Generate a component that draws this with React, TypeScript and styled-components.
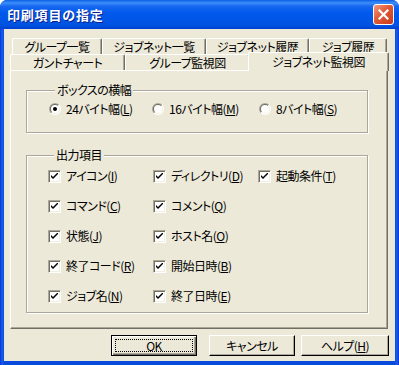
import React from "react";
import styled, { createGlobalStyle } from "styled-components";

const Global = createGlobalStyle`
  html, body { margin: 0; padding: 0; background: #ffffff; }
  #root { width: 399px; height: 365px; }
`;

const Window = styled.div`
  width: 399px;
  height: 365px;
  box-sizing: border-box;
  display: flex;
  flex-direction: column;
  background: linear-gradient(to right, #0831D9 0px, #1660EA 2px, #0A4BDD 4px, #0A4BDD 395px, #1660EA 397px, #0831D9 399px);
  border-radius: 7px 7px 0 0;
  overflow: hidden;
  font-family: "Noto Sans CJK JP", "Noto Sans CJK SC", sans-serif;
  font-size: 12px;
  font-feature-settings: "palt";
  letter-spacing: -0.5px;
  color: #000;
`;

const TitleBar = styled.div`
  height: 29px;
  flex: none;
  display: flex;
  align-items: center;
  justify-content: space-between;
  padding: 0 5px 0 7px;
  background: linear-gradient(
    to bottom,
    #0A5FE6 0%,
    #3C8EF9 10%,
    #1767F0 22%,
    #0059EC 45%,
    #0055E6 70%,
    #0152E0 88%,
    #003FD0 100%
  );
`;

const Title = styled.span`
  color: #fff;
  font-weight: bold;
  font-size: 13px;
  letter-spacing: 0.8px;
  text-shadow: 1px 1px 0 #0A1E8A;
  font-feature-settings: normal;
`;

const CloseButton = styled.div`
  width: 21px;
  height: 21px;
  box-sizing: border-box;
  border: 1px solid #fff;
  border-radius: 3px;
  background: linear-gradient(135deg, #F09A7C 0%, #E05A36 45%, #C7391A 100%);
  display: flex;
  align-items: center;
  justify-content: center;
`;

const Client = styled.div`
  flex: 1;
  margin: 0 4px 4px 4px;
  background: #ECE9D8;
  padding: 9px 7px 0 6px;
  display: flex;
  flex-direction: column;
`;

const TabRow = styled.div<{ $indent: number }>`
  display: flex;
  height: 16px;
  padding-left: ${(p) => p.$indent}px;
`;

const Tab = styled.div<{ $w: number; $selected?: boolean }>`
  width: ${(p) => (p.$selected ? p.$w + 4 : p.$w)}px;
  box-sizing: border-box;
  flex: none;
  height: ${(p) => (p.$selected ? 19 : 16)}px;
  margin: ${(p) => (p.$selected ? "-2px -2px -1px -2px" : "0")};
  position: relative;
  z-index: ${(p) => (p.$selected ? 2 : 1)};
  background: #ECE9D8;
  border-top: 1px solid #fff;
  border-left: 1px solid #fff;
  border-right: 1px solid #716F64;
  border-radius: 2px 2px 0 0;
  box-shadow: inset -1px 0 0 #ACA899;
  display: flex;
  align-items: ${(p) => (p.$selected ? "flex-start" : "center")};
  padding-top: ${(p) => (p.$selected ? 2 : 0)}px;
  justify-content: center;
  line-height: 14px;
  white-space: nowrap;
`;

const Panel = styled.div`
  height: 259px;
  flex: none;
  box-sizing: border-box;
  background: #ECE9D8;
  border-top: 1px solid #fff;
  border-left: 1px solid #fff;
  border-right: 1px solid #716F64;
  border-bottom: 1px solid #716F64;
  box-shadow: inset -1px -1px 0 #ACA899;
  padding: 12px 19px 0 15px;
  display: flex;
  flex-direction: column;
`;

const Group = styled.fieldset<{ $top: number; $padLeft: number }>`
  margin: ${(p) => p.$top}px 0 0 0;
  padding: 0 0 0 ${(p) => p.$padLeft}px;
  border: 1px solid #ACA899;
  box-shadow: inset 1px 1px 0 #fff, 1px 1px 0 #fff;
  min-width: 0;
`;

const Legend = styled.legend`
  margin-left: 6px;
  padding: 0 2px;
  line-height: 14px;
  background: #ECE9D8;
`;

const RadioRow = styled.div`
  display: flex;
  height: 14px;
  align-items: center;
  margin: 5px 0 16px 0;
`;

const Option = styled.div<{ $w?: number }>`
  display: flex;
  align-items: center;
  gap: 5px;
  white-space: nowrap;
  ${(p) => (p.$w ? `width: ${p.$w}px; flex: none;` : "")}
  line-height: 14px;
`;

const RadioOuter = styled.div`
  width: 12px;
  height: 12px;
  flex: none;
  border-radius: 50%;
  background: linear-gradient(135deg, #ACA899 50%, #fff 50%);
  display: flex;
  align-items: center;
  justify-content: center;
`;

const RadioInner = styled.div`
  width: 10px;
  height: 10px;
  border-radius: 50%;
  background: linear-gradient(135deg, #716F64 50%, #F1EFE2 50%);
  display: flex;
  align-items: center;
  justify-content: center;
`;

const RadioWell = styled.div`
  width: 8px;
  height: 8px;
  border-radius: 50%;
  background: #fff;
  display: flex;
  align-items: center;
  justify-content: center;
`;

const RadioDot = styled.div`
  width: 4px;
  height: 4px;
  border-radius: 50%;
  background: #000;
`;

const CheckGrid = styled.div`
  display: grid;
  grid-template-columns: 105px 105px auto;
  grid-auto-rows: 30px;
  align-items: center;
  margin-top: -1px;
  padding-bottom: 1px;
`;

const CheckBox = styled.div`
  width: 13px;
  height: 13px;
  flex: none;
  box-sizing: border-box;
  background: #fff;
  border-top: 1px solid #ACA899;
  border-left: 1px solid #ACA899;
  border-right: 1px solid #fff;
  border-bottom: 1px solid #fff;
  box-shadow: inset 1px 1px 0 #716F64, inset -1px -1px 0 #F1EFE2;
  display: flex;
  align-items: center;
  justify-content: center;
`;

const U = styled.span`
  text-decoration: underline;
  text-underline-offset: 1px;
`;

const ButtonRow = styled.div`
  display: flex;
  justify-content: flex-end;
  margin-top: 6px;
  margin-right: -1px;
`;

const Button = styled.div<{ $default?: boolean; $ml: number; $w: number }>`
  width: ${(p) => p.$w}px;
  height: 21px;
  margin-left: ${(p) => p.$ml}px;
  box-sizing: border-box;
  background: #ECE9D8;
  ${(p) =>
    p.$default
      ? `border: 1px solid #000; box-shadow: inset 1px 1px 0 #fff, inset -1px -1px 0 #716F64, inset -2px -2px 0 #ACA899;`
      : `border-top: 1px solid #fff; border-left: 1px solid #fff; border-right: 1px solid #000; border-bottom: 1px solid #000; box-shadow: inset -1px -1px 0 #ACA899;`}
  display: flex;
  align-items: center;
  justify-content: center;
  line-height: 14px;
  position: relative;
`;

const FocusRect = styled.div`
  position: absolute;
  inset: 3px;
  border: 1px dotted #000;
`;

function Radio({ checked }: { checked?: boolean }) {
  return (
    <RadioOuter>
      <RadioInner>
        <RadioWell>{checked && <RadioDot />}</RadioWell>
      </RadioInner>
    </RadioOuter>
  );
}

function Check() {
  return (
    <CheckBox>
      <svg width="7" height="7" viewBox="0 0 7 7">
        <path d="M0 2 L0 4 L2 6 L7 1 L7 -1 L2 4 Z" fill="#000" />
      </svg>
    </CheckBox>
  );
}

const Mn = ({ text, k }: { text: string; k: string }) => (
  <span>
    {text}(<U>{k}</U>)
  </span>
);

const items: [string, string][][] = [
  [["アイコン", "I"], ["ディレクトリ", "D"], ["起動条件", "T"]],
  [["コマンド", "C"], ["コメント", "Q"]],
  [["状態", "J"], ["ホスト名", "O"]],
  [["終了コード", "R"], ["開始日時", "B"]],
  [["ジョブ名", "N"], ["終了日時", "E"]],
];

export default function App() {
  return (
    <>
      <Global />
      <Window>
        <TitleBar>
          <Title>印刷項目の指定</Title>
          <CloseButton>
            <svg width="11" height="11" viewBox="0 0 11 11">
              <path d="M1.5 1.5 L9.5 9.5 M9.5 1.5 L1.5 9.5" stroke="#fff" strokeWidth="2.2" strokeLinecap="square" />
            </svg>
          </CloseButton>
        </TitleBar>
        <Client>
          <TabRow $indent={2}>
            <Tab $w={90}>グループ一覧</Tab>
            <Tab $w={104}>ジョブネット一覧</Tab>
            <Tab $w={103}>ジョブネット履歴</Tab>
            <Tab $w={78}>ジョブ履歴</Tab>
          </TabRow>
          <TabRow $indent={0}>
            <Tab $w={115}>ガントチャート</Tab>
            <Tab $w={125}>グループ監視図</Tab>
            <Tab $w={137} $selected>
              ジョブネット監視図
            </Tab>
          </TabRow>
          <Panel>
            <Group $top={0} $padLeft={22}>
              <Legend>ボックスの横幅</Legend>
              <RadioRow>
                <Option $w={103}>
                  <Radio checked />
                  <Mn text="24バイト幅" k="L" />
                </Option>
                <Option $w={107}>
                  <Radio />
                  <Mn text="16バイト幅" k="M" />
                </Option>
                <Option>
                  <Radio />
                  <Mn text="8バイト幅" k="S" />
                </Option>
              </RadioRow>
            </Group>
            <Group $top={15} $padLeft={21}>
              <Legend>出力項目</Legend>
              <CheckGrid>
                {items.map((row, ri) =>
                  [0, 1, 2].map((ci) =>
                    row[ci] ? (
                      <Option key={ri + "-" + ci}>
                        <Check />
                        <Mn text={row[ci][0]} k={row[ci][1]} />
                      </Option>
                    ) : (
                      <span key={ri + "-" + ci} />
                    )
                  )
                )}
              </CheckGrid>
            </Group>
          </Panel>
          <ButtonRow>
            <Button $default $ml={0} $w={86}>
              <FocusRect />
              OK
            </Button>
            <Button $ml={12} $w={86}>キャンセル</Button>
            <Button $ml={6} $w={88}>
              <Mn text="ヘルプ" k="H" />
            </Button>
          </ButtonRow>
        </Client>
      </Window>
    </>
  );
}
